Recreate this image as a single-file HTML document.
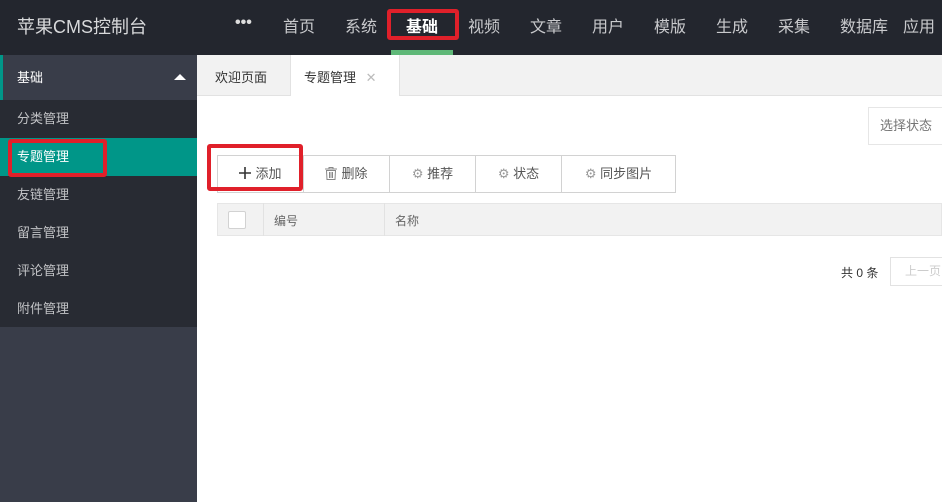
<!DOCTYPE html><html><head><meta charset="utf-8"><style>
*{margin:0;padding:0;box-sizing:border-box}
body{width:942px;height:502px;overflow:hidden;position:relative;font-family:"Liberation Sans","Noto Sans CJK SC",sans-serif;background:#fff;font-size:13px;color:#333}
.a{position:absolute}
.hd{left:0;top:0;width:942px;height:55px;background:#23262e}
.nav{top:13px;font-size:16px;color:#c8c9cc;white-space:nowrap}
.sb{left:0;top:55px;width:197px;height:447px;background:#393d49}
.si{left:0;width:197px;height:38px;background:#282b33;color:#c2c3c6;font-size:13px;padding-left:17px;line-height:38px}
.btn{top:155px;height:38px;border:1px solid #d2d2d2;background:#fff;line-height:36px;text-align:center;color:#555;font-size:13px}
.red{border:4px solid #e0202a;border-radius:3px}
</style></head><body>
<div class="a hd"></div>
<div class="a" style="left:17px;top:13px;font-size:18px;color:#d8d9db">苹果CMS控制台</div>
<div class="a nav" style="left:235px;top:14px;font-weight:bold;color:#ddd">•••</div>
<div class="a nav" style="left:283px">首页</div>
<div class="a nav" style="left:345px">系统</div>
<div class="a nav" style="left:406px;color:#fff;font-weight:bold">基础</div>
<div class="a nav" style="left:468px">视频</div>
<div class="a nav" style="left:530px">文章</div>
<div class="a nav" style="left:592px">用户</div>
<div class="a nav" style="left:654px">模版</div>
<div class="a nav" style="left:716px">生成</div>
<div class="a nav" style="left:778px">采集</div>
<div class="a nav" style="left:840px">数据库</div>
<div class="a nav" style="left:903px">应用</div>
<div class="a" style="left:391px;top:50px;width:62px;height:5px;background:#5fb878"></div>
<div class="a red" style="left:387px;top:9px;width:72px;height:31px"></div>
<div class="a sb"></div>
<div class="a" style="left:0;top:55px;width:197px;height:45px;background:#393d49;border-left:3px solid #009688;color:#fff;font-size:13px;padding-left:14px;line-height:45px">基础<span style="position:absolute;right:11px;top:19px;width:0;height:0;border-left:6px solid transparent;border-right:6px solid transparent;border-bottom:6px solid #fff"></span></div>
<div class="a si" style="top:100px">分类管理</div>
<div class="a si" style="top:138px;background:#009688;color:#fff">专题管理</div>
<div class="a si" style="top:176px">友链管理</div>
<div class="a si" style="top:214px">留言管理</div>
<div class="a si" style="top:252px">评论管理</div>
<div class="a si" style="top:290px;height:37px">附件管理</div>
<div class="a red" style="left:8px;top:139px;width:99px;height:38px"></div>
<div class="a" style="left:197px;top:55px;width:745px;height:41px;background:#f2f2f2;border-bottom:1px solid #e2e2e2"></div>
<div class="a" style="left:215px;top:67px;font-size:13px;color:#333">欢迎页面</div>
<div class="a" style="left:290px;top:55px;width:110px;height:41px;background:#fff;border-left:1px solid #e2e2e2;border-right:1px solid #e2e2e2"></div>
<div class="a" style="left:304px;top:67px;font-size:13px;color:#333">专题管理 <span style="color:#bbb;margin-left:6px">✕</span></div>
<div class="a" style="left:868px;top:107px;width:80px;height:38px;border:1px solid #e6e6e6;color:#757575;line-height:36px;padding-left:11px">选择状态</div>
<div class="a btn" style="left:217px;width:87px"><svg width="12" height="12" style="vertical-align:-1px;margin-right:4px"><path d="M6 0V12M0 6H12" stroke="#333" stroke-width="1.6"/></svg>添加</div>
<div class="a btn" style="left:303px;width:87px"><svg width="12" height="13" style="vertical-align:-2px;margin-right:4px"><path d="M0 2H12M4 2V0.5H8V2M1.5 3.5H10.5L10 12.5H2Z M4.5 5V11M6 5V11M7.5 5V11" stroke="#888" fill="none"/></svg>删除</div>
<div class="a btn" style="left:389px;width:87px"><span style="color:#999">⚙</span> 推荐</div>
<div class="a btn" style="left:475px;width:87px"><span style="color:#999">⚙</span> 状态</div>
<div class="a btn" style="left:561px;width:115px"><span style="color:#999">⚙</span> 同步图片</div>
<div class="a red" style="left:207px;top:144px;width:96px;height:47px"></div>
<div class="a" style="left:217px;top:203px;width:725px;height:33px;background:#f2f2f2;border:1px solid #e6e6e6"></div>
<div class="a" style="left:263px;top:203px;width:1px;height:33px;background:#e2e2e2"></div>
<div class="a" style="left:384px;top:203px;width:1px;height:33px;background:#e2e2e2"></div>
<div class="a" style="left:228px;top:211px;width:18px;height:18px;border:1px solid #d2d2d2;background:#fff;border-radius:2px"></div>
<div class="a" style="left:274px;top:212px;font-size:12px;color:#666">编号</div>
<div class="a" style="left:395px;top:212px;font-size:12px;color:#666">名称</div>
<div class="a" style="left:841px;top:264px;font-size:12px;color:#333">共 0 条</div>
<div class="a" style="left:890px;top:257px;width:60px;height:29px;border:1px solid #e2e2e2;color:#ccc;font-size:12px;line-height:27px;padding-left:14px">上一页</div>
</body></html>
